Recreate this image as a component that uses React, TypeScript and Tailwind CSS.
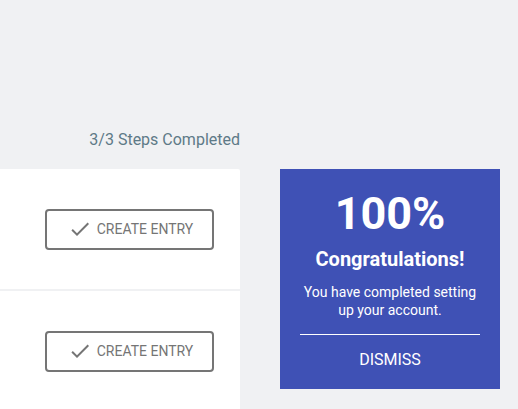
import React from "react";

function CheckIcon() {
  return (
    <svg width="24" height="24" viewBox="0 0 24 24" fill="#757575">
      <path d="M9 16.17L4.83 12l-1.42 1.41L9 19 21 7l-1.41-1.41z" />
    </svg>
  );
}

function EntryCard({ className = "" }: { className?: string }) {
  return (
    <div className={`bg-white h-[120px] flex items-center justify-end pr-[26px] ${className}`}>
      <button className="w-[169px] h-[41px] border-2 border-[#757575] rounded-[4px] flex items-center justify-center gap-[5px] text-[#757575] text-[14px] pl-[2px]">
        <CheckIcon />
        <span>CREATE ENTRY</span>
      </button>
    </div>
  );
}

export default function App() {
  return (
    <div
      className="w-[518px] h-[409px] bg-[#f0f1f3] overflow-hidden"
      style={{ fontFamily: "Roboto, 'Liberation Sans', sans-serif" }}
    >
      <div className="h-[169px] flex items-end">
        <div className="w-[240px] text-right text-[16px] leading-[24px] text-[#5e7a87] pb-[17px]">3/3 Steps Completed</div>
      </div>
      <div className="flex gap-[40px]">
        <div className="w-[240px] flex flex-col gap-[2px]">
          <EntryCard className="rounded-tr-[2px]" />
          <EntryCard />
        </div>
        <div className="w-[220px] h-[220px] bg-[#3f51b5] text-white flex flex-col items-center pt-[20px]">
          <div className="text-[45px] font-bold leading-[50px]">100%</div>
          <div className="text-[20px] font-bold leading-[24px] mt-[8px]">Congratulations!</div>
          <div className="text-[14px] leading-[18px] text-center mt-[12px] px-[20px]">
            You have completed setting up your account.
          </div>
          <div className="w-[180px] h-px bg-white mt-[15px]"></div>
          <div className="text-[16px] mt-[16px] leading-[18px]">DISMISS</div>
        </div>
      </div>
    </div>
  );
}
